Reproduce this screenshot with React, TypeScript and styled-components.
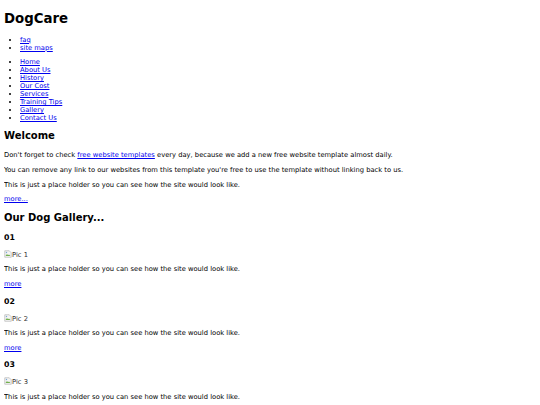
import styled, { createGlobalStyle } from "styled-components";

const Base = createGlobalStyle`
  html, body {
    background: #fff;
  }
  body {
    margin: 4px;
    font-family: "DejaVu Sans", Verdana, sans-serif;
    font-size: 6.74px;
    color: #000;
  }
`;

const SiteTitle = styled.h1`
  font-size: 13.33px;
  font-weight: bold;
  margin: 7px 0 9.5px;
`;

const LinkList = styled.ul`
  margin: 6.67px 0;
  padding-left: 16px;
  list-style: disc;
`;

const Item = styled.li`
  line-height: normal;
`;

const Link = styled.a`
  color: #0000ee;
  text-decoration: underline;
  cursor: pointer;
`;

const SectionTitle = styled.h2`
  font-size: 10px;
  font-weight: bold;
  margin: 8.3px 0 10px;
`;

const PicTitle = styled.h3`
  font-size: 7.8px;
  font-weight: bold;
  margin: 8.5px 0 8px;
`;

const Para = styled.p`
  margin: 6.67px 0;
`;

const PicPara = styled.p`
  margin: 7px 0 5.5px;
`;

const BrokenPic = styled.span`
  color: #333;
  svg {
    width: 8px;
    height: 8px;
    vertical-align: -1px;
  }
`;

const topLinks = ["faq", "site maps"];
const navLinks = [
  "Home",
  "About Us",
  "History",
  "Our Cost",
  "Services",
  "Training Tips",
  "Gallery",
  "Contact Us",
];
const pics = ["01", "02", "03"];
const holder = "This is just a place holder so you can see how the site would look like.";

function BrokenImage({ alt }: { alt: string }) {
  return (
    <BrokenPic>
      <svg viewBox="0 0 16 16" aria-hidden="true">
        <path d="M1.5 1.5h9l4 4v9h-13z" fill="#f4f4f4" stroke="#9a9a9a" />
        <path d="M3 12l3-4 2 2.5 2-1.5 3 3z" fill="#6fae4a" />
        <circle cx="5" cy="5" r="1.4" fill="#7aa7d6" />
      </svg>
      {alt}
    </BrokenPic>
  );
}

export default function App() {
  return (
    <>
      <Base />
      <SiteTitle>DogCare</SiteTitle>
      <LinkList>
        {topLinks.map((l) => (
          <Item key={l}>
            <Link>{l}</Link>
          </Item>
        ))}
      </LinkList>
      <LinkList>
        {navLinks.map((l) => (
          <Item key={l}>
            <Link>{l}</Link>
          </Item>
        ))}
      </LinkList>

      <SectionTitle>Welcome</SectionTitle>
      <Para>
        Don't forget to check <Link>free website templates</Link> every day,
        because we add a new free website template almost daily.
      </Para>
      <Para>
        You can remove any link to our websites from this template you're free
        to use the template without linking back to us.
      </Para>
      <Para>{holder}</Para>
      <Para>
        <Link>more...</Link>
      </Para>

      <SectionTitle>Our Dog Gallery...</SectionTitle>
      {pics.map((n, i) => (
        <div key={n}>
          <PicTitle>{n}</PicTitle>
          <PicPara>
            <BrokenImage alt={`Pic ${i + 1}`} />
          </PicPara>
          <Para>{holder}</Para>
          {i < 2 && (
            <Para>
              <Link>more</Link>
            </Para>
          )}
        </div>
      ))}
    </>
  );
}
